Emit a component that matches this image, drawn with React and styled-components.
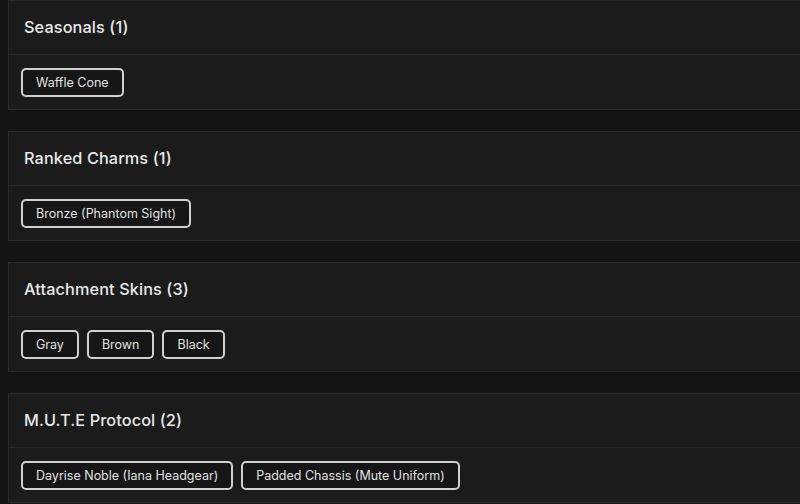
import React from "react";
import styled, { createGlobalStyle } from "styled-components";

const GlobalStyle = createGlobalStyle`
  html, body {
    margin: 0;
    padding: 0;
    background: #141414;
    overflow: hidden;
  }
  body {
    font-family: 'Inter', 'Noto Sans', sans-serif;
  }
`;

const groups = [
  { title: "Seasonals", items: ["Waffle Cone"] },
  { title: "Ranked Charms", items: ["Bronze (Phantom Sight)"] },
  { title: "Attachment Skins", items: ["Gray", "Brown", "Black"] },
  {
    title: "M.U.T.E Protocol",
    items: ["Dayrise Noble (Iana Headgear)", "Padded Chassis (Mute Uniform)"],
  },
];

function App() {
  return (
    <Page>
      <GlobalStyle />
      {groups.map((g) => (
        <Card key={g.title}>
          <Header>
            <Title>
              {g.title} ({g.items.length})
            </Title>
          </Header>
          <Body>
            {g.items.map((it) => (
              <Chip key={it}>{it}</Chip>
            ))}
          </Body>
        </Card>
      ))}
    </Page>
  );
}

const Page = styled.div`
  display: flex;
  flex-direction: column;
  gap: 21px;
  padding-left: 8px;
  width: 840px;
`;

const Card = styled.section`
  background: #1b1b1b;
  border: 1px solid #2a2a2a;
  display: flex;
  flex-direction: column;
`;

const Header = styled.div`
  height: 53px;
  display: flex;
  align-items: center;
  padding: 0 15px;
  border-bottom: 1px solid #2a2a2a;
`;

const Title = styled.h3`
  margin: 0 0 1px;
  color: #e8e8e8;
  font-size: 16.3px;
  font-weight: 500;
  letter-spacing: 0.1px;
`;

const Body = styled.div`
  display: flex;
  flex-wrap: wrap;
  gap: 8px;
  padding: 13px 12px 12px;
`;

const Chip = styled.button`
  height: 29px;
  padding: 1px 13px 0;
  border: 2px solid #d0d0d0;
  border-radius: 5px;
  background: #161616;
  color: #e2e2e2;
  font-family: 'Inter', 'Noto Sans', sans-serif;
  font-size: 12.5px;
  font-weight: 400;
  line-height: 1;
  white-space: nowrap;
`;

export default App;
